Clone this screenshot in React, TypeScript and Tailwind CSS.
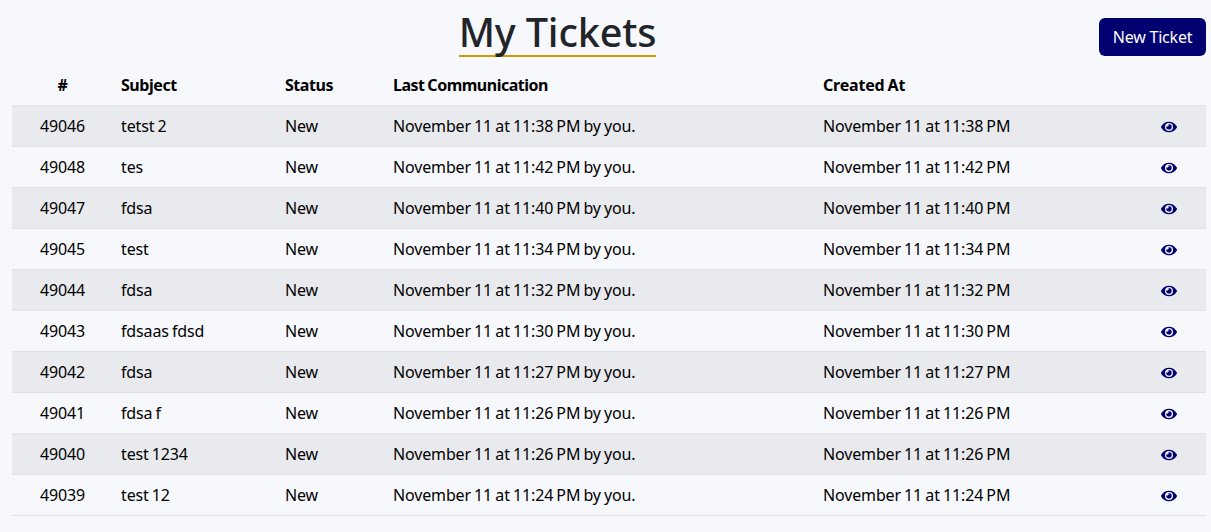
import { FaEye } from 'react-icons/fa';

const tickets = [
  { id: 49046, subject: 'tetst 2', time: '11:38 PM' },
  { id: 49048, subject: 'tes', time: '11:42 PM' },
  { id: 49047, subject: 'fdsa', time: '11:40 PM' },
  { id: 49045, subject: 'test', time: '11:34 PM' },
  { id: 49044, subject: 'fdsa', time: '11:32 PM' },
  { id: 49043, subject: 'fdsaas fdsd', time: '11:30 PM' },
  { id: 49042, subject: 'fdsa', time: '11:27 PM' },
  { id: 49041, subject: 'fdsa f', time: '11:26 PM' },
  { id: 49040, subject: 'test 1234', time: '11:26 PM' },
  { id: 49039, subject: 'test 12', time: '11:24 PM' },
];

export default function App() {
  return (
    <div className="min-h-[532px] bg-[#f7f8fc] px-[5px] pt-[18px] font-['Noto_Sans',sans-serif] text-[16px] text-black">
      <div className="flex h-[40px]">
        <div className="flex flex-1 justify-center pl-[11px]">
          <h1 className="h-[39px] border-b-2 border-[#cc9a06] text-[39.6px] leading-[28px] font-medium tracking-[-0.15px] text-[#212529]">
            My Tickets
          </h1>
        </div>
        <button className="h-[38px] w-[107px] rounded-[6px] bg-[#000070] text-[16px] tracking-[-0.2px] text-white">
          New Ticket
        </button>
      </div>
      <div className="pl-[7px]">
        <table className="w-[1194px] table-fixed border-collapse tracking-[-0.15px] [word-spacing:-0.8px]">
          <colgroup>
            <col className="w-[101px]" />
            <col className="w-[164px]" />
            <col className="w-[108px]" />
            <col className="w-[430px]" />
            <col className="w-[317px]" />
            <col className="w-[74px]" />
          </colgroup>
          <thead>
            <tr className="h-[47px] border-b border-[#dee2e6] font-bold tracking-[-0.45px]">
              <th className="px-2 pt-[8px] text-center">#</th>
              <th className="px-2 pt-[8px] text-left">Subject</th>
              <th className="px-2 pt-[8px] text-left">Status</th>
              <th className="px-2 pt-[8px] text-left tracking-[-0.5px]">Last Communication</th>
              <th className="px-2 pt-[8px] text-left tracking-[-0.2px]">Created At</th>
              <th />
            </tr>
          </thead>
          <tbody>
            {tickets.map((t, i) => (
              <tr
                key={t.id}
                className={`h-[41px] border-b border-[#dee2e6] ${i % 2 === 0 ? 'bg-[#e9eaee]' : ''}`}
              >
                <td className="px-2 text-center">{t.id}</td>
                <td className="px-2">{t.subject}</td>
                <td className="px-2">New</td>
                <td className="px-2">November 11 at {t.time} by you.</td>
                <td className="px-2">November 11 at {t.time}</td>
                <td className="px-2 pt-[2px]">
                  <FaEye className="mx-auto text-[16px] text-[#000070]" />
                </td>
              </tr>
            ))}
          </tbody>
        </table>
      </div>
    </div>
  );
}
